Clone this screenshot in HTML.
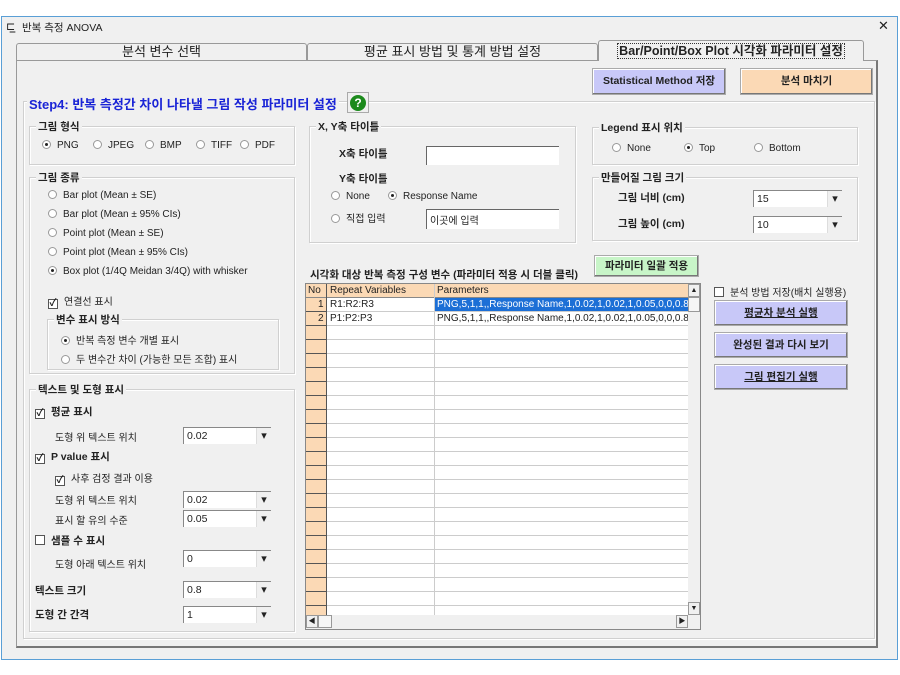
<!DOCTYPE html>
<html><head><meta charset="utf-8">
<style>
*{box-sizing:border-box;margin:0;padding:0}
body{width:900px;height:675px;background:#fff;position:relative;overflow:hidden;font-family:"Liberation Sans","Noto Sans CJK KR",sans-serif;font-size:10px;color:#222}
.a{position:absolute;white-space:nowrap}
.win{position:absolute;left:1px;top:16px;width:897px;height:644px;border:1px solid #5a9fd6;background:#f0f0f0}
.grp{position:absolute;border:1px solid #d0d0d0;box-shadow:inset 1px 1px 0 #fff,1px 1px 0 #fff}
.gt{position:absolute;top:-8px;left:6px;background:#f0f0f0;padding:0 2px;font-weight:bold;font-size:10.5px}
.r{display:inline-block;width:9px;height:9px;border-radius:50%;border:1px solid #999;background:#fff;vertical-align:-1px;margin-right:6px;position:relative}
.r.on::after{content:"";position:absolute;left:2px;top:2px;width:3px;height:3px;border-radius:50%;background:#222}
.c{display:inline-block;width:10px;height:10px;border:1px solid #555;background:#fff;vertical-align:-1px;margin-right:6px;position:relative;font-size:10px;line-height:8px;text-align:center;font-weight:bold}
.cb{position:absolute;height:17px;background:#fff;border-top:1px solid #888;border-left:1px solid #888;font-size:10.5px;padding:2px 3px}
.cb::after{content:"▾";position:absolute;right:0;top:0;width:14px;height:16px;background:#f0f0f0;border-left:1px solid #ddd;text-align:center;font-size:11px;line-height:16px}
.tb{position:absolute;background:#fff;border-top:1px solid #666;border-left:1px solid #666;padding:2px 3px}
.btn{position:absolute;text-align:center;font-weight:bold;font-size:10.5px;border:1px solid #aaa;box-shadow:inset -1px -1px 0 #777,inset 1px 1px 0 #fff}
.b{font-weight:bold;font-size:10.5px}
.row{position:absolute;left:0;width:382px;height:14px;border-bottom:1px solid #ccc}
</style></head><body>
<div class="win"></div>
<div class="a" style="left:6px;top:20px;font-size:11px">⊏̲</div>
<div class="a" style="left:22px;top:20px;font-size:10.5px">반복 측정 ANOVA</div>
<div class="a" style="left:878px;top:18px;font-size:13px">✕</div>
<div class="a" style="left:2px;top:37px;width:895px;height:622px;background:#f0f0f0"></div>
<!-- tabs -->
<div class="a" style="left:16px;top:43px;width:291px;height:18px;border:1px solid #999;border-bottom:none;border-radius:3px 3px 0 0;text-align:center;font-size:13px;line-height:16px">분석 변수 선택</div>
<div class="a" style="left:307px;top:43px;width:291px;height:18px;border:1px solid #999;border-bottom:none;border-radius:3px 3px 0 0;text-align:center;font-size:13px;line-height:16px">평균 표시 방법 및 통계 방법 설정</div>
<div class="a" style="left:598px;top:40px;width:266px;height:21px;border:1px solid #999;border-bottom:none;border-radius:3px 3px 0 0;background:#f0f0f0;text-align:center;font-size:12.5px;line-height:20px;font-weight:bold;z-index:2"><span style="border:1px dotted #333;padding:0 1px">Bar/Point/Box Plot 시각화 파라미터 설정</span></div>
<div class="a" style="left:16px;top:60px;width:862px;height:588px;border:1px solid #999;border-right:2px solid #777;border-bottom:2px solid #777"></div>
<div class="btn" style="left:592px;top:68px;width:134px;height:27px;background:#c8c8f8;line-height:25px">Statistical Method 저장</div>
<div class="btn" style="left:740px;top:68px;width:133px;height:27px;background:#fbd9b5;line-height:25px">분석 마치기</div>
<!-- step4 frame -->
<div class="grp" style="left:23px;top:101px;width:852px;height:538px"></div>
<div class="a" style="left:27px;top:94px;background:#f0f0f0;padding:0 2px;color:#1a24d6;font-weight:bold;font-size:13px">Step4: 반복 측정간 차이 나타낼 그림 작성 파라미터 설정</div>
<div class="a" style="left:347px;top:92px;width:22px;height:21px;background:#f0f0f0;border:1px solid #aaa"><div style="margin:2px;width:16px;height:16px;border-radius:50%;background:#1c8a1c;color:#fff;font-weight:bold;text-align:center;line-height:16px;font-size:12px">?</div></div>
<!-- 그림 형식 -->
<div class="grp" style="left:29px;top:126px;width:266px;height:39px"><div class="gt">그림 형식</div></div>
<div class="a" style="left:42px;top:140px"><span class="r on"></span>PNG</div>
<div class="a" style="left:93px;top:140px"><span class="r"></span>JPEG</div>
<div class="a" style="left:145px;top:140px"><span class="r"></span>BMP</div>
<div class="a" style="left:196px;top:140px"><span class="r"></span>TIFF</div>
<div class="a" style="left:240px;top:140px"><span class="r"></span>PDF</div>
<!-- 그림 종류 -->
<div class="grp" style="left:29px;top:177px;width:266px;height:197px"><div class="gt">그림 종류</div></div>
<div class="a" style="left:48px;top:190px"><span class="r"></span>Bar plot (Mean ± SE)</div>
<div class="a" style="left:48px;top:209px"><span class="r"></span>Bar plot (Mean ± 95% CIs)</div>
<div class="a" style="left:48px;top:228px"><span class="r"></span>Point plot (Mean ± SE)</div>
<div class="a" style="left:48px;top:247px"><span class="r"></span>Point plot (Mean ± 95% CIs)</div>
<div class="a" style="left:48px;top:266px"><span class="r on"></span>Box plot (1/4Q Meidan 3/4Q) with whisker</div>
<div class="a" style="left:48px;top:293px"><span class="c">✓</span>연결선 표시</div>
<div class="grp" style="left:47px;top:319px;width:232px;height:51px"><div class="gt">변수 표시 방식</div></div>
<div class="a" style="left:61px;top:332px"><span class="r on"></span>반복 측정 변수 개별 표시</div>
<div class="a" style="left:61px;top:351px"><span class="r"></span>두 변수간 차이 (가능한 모든 조합) 표시</div>
<!-- 텍스트 및 도형 -->
<div class="grp" style="left:29px;top:389px;width:266px;height:243px"><div class="gt">텍스트 및 도형 표시</div></div>
<div class="a b" style="left:35px;top:404px"><span class="c">✓</span>평균 표시</div>
<div class="a" style="left:55px;top:429px">도형 위 텍스트 위치</div>
<div class="cb" style="left:183px;top:427px;width:88px">0.02</div>
<div class="a b" style="left:35px;top:449px"><span class="c">✓</span>P value 표시</div>
<div class="a" style="left:55px;top:470px"><span class="c">✓</span>사후 검정 결과 이용</div>
<div class="a" style="left:55px;top:492px">도형 위 텍스트 위치</div>
<div class="cb" style="left:183px;top:491px;width:88px">0.02</div>
<div class="a" style="left:55px;top:512px">표시 할 유의 수준</div>
<div class="cb" style="left:183px;top:510px;width:88px">0.05</div>
<div class="a b" style="left:35px;top:533px"><span class="c"></span>샘플 수 표시</div>
<div class="a" style="left:55px;top:556px">도형 아래 텍스트 위치</div>
<div class="cb" style="left:183px;top:550px;width:88px">0</div>
<div class="a b" style="left:35px;top:583px">텍스트 크기</div>
<div class="cb" style="left:183px;top:581px;width:88px">0.8</div>
<div class="a b" style="left:35px;top:607px">도형 간 간격</div>
<div class="cb" style="left:183px;top:606px;width:88px">1</div>
<!-- XY -->
<div class="grp" style="left:309px;top:126px;width:267px;height:117px"><div class="gt">X, Y축 타이틀</div></div>
<div class="a b" style="left:339px;top:146px">X축 타이틀</div>
<div class="tb" style="left:426px;top:146px;width:133px;height:19px"></div>
<div class="a b" style="left:339px;top:171px">Y축 타이틀</div>
<div class="a" style="left:331px;top:191px"><span class="r"></span>None</div>
<div class="a" style="left:388px;top:191px"><span class="r on"></span>Response Name</div>
<div class="a" style="left:331px;top:210px"><span class="r"></span>직접 입력</div>
<div class="tb" style="left:426px;top:209px;width:133px;height:20px">이곳에 입력</div>
<!-- legend -->
<div class="grp" style="left:592px;top:127px;width:266px;height:38px"><div class="gt">Legend 표시 위치</div></div>
<div class="a" style="left:612px;top:143px"><span class="r"></span>None</div>
<div class="a" style="left:684px;top:143px"><span class="r on"></span>Top</div>
<div class="a" style="left:754px;top:143px"><span class="r"></span>Bottom</div>
<div class="grp" style="left:592px;top:177px;width:266px;height:64px"><div class="gt">만들어질 그림 크기</div></div>
<div class="a b" style="left:618px;top:190px">그림 너비 (cm)</div>
<div class="cb" style="left:753px;top:190px;width:89px">15</div>
<div class="a b" style="left:618px;top:216px">그림 높이 (cm)</div>
<div class="cb" style="left:753px;top:216px;width:89px">10</div>
<!-- grid -->
<div class="a b" style="left:310px;top:267px">시각화 대상 반복 측정 구성 변수 (파라미터 적용 시 더블 클릭)</div>
<div class="btn" style="left:594px;top:255px;width:105px;height:22px;background:#c8f5c8;line-height:20px">파라미터 일괄 적용</div>
<div class="a" style="left:305px;top:283px;width:396px;height:347px;background:#f0f0f0;border:1px solid #888">
  <div class="a" style="left:0;top:0;width:382px;height:331px;background:#fff;overflow:hidden">
    <div class="row" style="top:0;background:#fbd9b5;border-bottom:1px solid #888"></div>
    <div class="a" style="left:2px;top:1px">No</div><div class="a" style="left:24px;top:1px">Repeat Variables</div><div class="a" style="left:131px;top:1px">Parameters</div>
    <div class="a" style="left:0;top:14px;width:20px;height:317px;background:repeating-linear-gradient(#fbd9b5 0 13px,#555 13px 14px)"></div>
    <div class="a" style="left:20px;top:0;width:1px;height:331px;background:#555"></div>
    <div class="a" style="left:128px;top:0;width:1px;height:331px;background:#ccc"></div>
    <div class="a" style="left:21px;top:14px;width:361px;height:317px;background:repeating-linear-gradient(transparent 0 13px,#ccc 13px 14px)"></div>
    <div class="a" style="left:129px;top:14px;width:253px;height:13px;background:#1c6fd6"></div>
    <div class="a" style="left:12px;top:15px">1</div><div class="a" style="left:24px;top:15px">R1:R2:R3</div><div class="a" style="left:131px;top:15px;color:#fff">PNG,5,1,1,,Response Name,1,0.02,1,0.02,1,0.05,0,0,0.8,1,1</div>
    <div class="a" style="left:12px;top:29px">2</div><div class="a" style="left:24px;top:29px">P1:P2:P3</div><div class="a" style="left:131px;top:29px">PNG,5,1,1,,Response Name,1,0.02,1,0.02,1,0.05,0,0,0.8,1,1</div>
  </div>
  <div class="a" style="left:382px;top:0;width:12px;height:13px;border:1px solid #999;background:#f0f0f0;font-size:7px;text-align:center;line-height:11px">▲</div>
  <div class="a" style="left:382px;top:13px;width:12px;height:15px;border:1px solid #999;background:#f6f6f6"></div>
  <div class="a" style="left:382px;top:318px;width:12px;height:13px;border:1px solid #999;background:#f0f0f0;font-size:7px;text-align:center;line-height:11px">▼</div>
  <div class="a" style="left:0;top:331px;width:12px;height:13px;border:1px solid #999;background:#f0f0f0;font-size:7px;text-align:center;line-height:11px">◀</div>
  <div class="a" style="left:12px;top:331px;width:14px;height:13px;border:1px solid #999;background:#f6f6f6"></div>
  <div class="a" style="left:370px;top:331px;width:12px;height:13px;border:1px solid #999;background:#f0f0f0;font-size:7px;text-align:center;line-height:11px">▶</div>
</div>
<!-- right -->
<div class="a" style="left:714px;top:284px"><span class="c"></span>분석 방법 저장(배치 실행용)</div>
<div class="btn" style="left:714px;top:300px;width:134px;height:26px;background:#c8c8f8;line-height:24px;text-decoration:underline">평균차 분석 실행</div>
<div class="btn" style="left:714px;top:332px;width:134px;height:26px;background:#c8c8f8;line-height:24px">완성된 결과 다시 보기</div>
<div class="btn" style="left:714px;top:364px;width:134px;height:26px;background:#c8c8f8;line-height:24px;text-decoration:underline">그림 편집기 실행</div>
</body></html>
